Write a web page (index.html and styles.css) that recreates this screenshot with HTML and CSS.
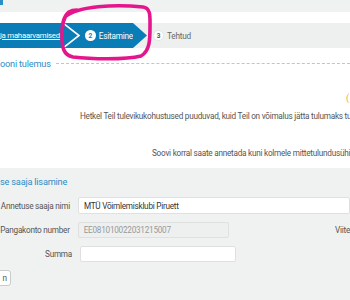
FILE: index.html
```html
<!DOCTYPE html>
<html lang="et">
<head>
    <meta charset="UTF-8">
    <title>Esitamine</title>
    <link rel="stylesheet" href="styles.css">
</head>
<body>
    <div class="top-strip"><span class="top-mark"></span></div>

    <div class="steps">
        <div class="step done"><a href="#">ja mahaarvamised</a></div>
        <svg class="chevron" width="17" height="25" viewBox="0 0 17 25">
            <rect width="17" height="25" fill="#0a7db6"/>
            <polyline points="0,0 16,12.5 0,25" fill="none" stroke="#fff" stroke-width="1.6"/>
        </svg>
        <div class="step current"><span class="num">2</span>Esitamine</div>
        <svg class="tip" width="14" height="25" viewBox="0 0 14 25">
            <polygon points="0,0 14,12.5 0,25" fill="#0a7db6"/>
        </svg>
        <div class="step todo"><span class="num">3</span>Tehtud</div>
    </div>

    <div class="section-title">
        <span>ooni tulemus</span>
        <span class="dots"></span>
    </div>

    <div class="result">
        <span class="warn">(</span>
        <p class="line-one">Hetkel Teil tulevikukohustused puuduvad, kuid Teil on võimalus jätta tulumaks tule</p>
        <p class="line-two">Soovi korral saate annetada kuni kolmele mittetulundusühing</p>
    </div>

    <div class="panel">
        <h2>se saaja lisamine</h2>
        <div class="form-row">
            <label>Annetuse saaja nimi</label>
            <input type="text" class="wide" value="MTÜ Võimlemisklubi Piruett">
        </div>
        <div class="form-row">
            <label>Pangakonto number</label>
            <input type="text" value="EE081010022031215007" disabled>
            <span class="side-label">Viite</span>
        </div>
        <div class="form-row">
            <label>Summa</label>
            <input type="text">
        </div>
        <button class="btn">n</button>
    </div>

    <svg class="circle-mark" width="100" height="62" viewBox="0 0 100 62">
        <path d="M10 14 C 22 3, 60 1, 88 4 C 96 5, 95 14, 95 24 C 95 36, 95 48, 86 53 C 70 57, 35 56, 18 54 C 8 52, 7 44, 7 32 C 7 22, 8 14, 14 9 C 17 7, 20 7, 22 7"
              fill="none" stroke="#e5168c" stroke-width="3.6" stroke-linecap="round"/>
    </svg>
</body>
</html>
```

FILE: styles.css
```css
body {
    margin: 0;
    font-family: Roboto, "Liberation Sans", sans-serif;
    color: #555;
    background: #fff;
    width: 350px;
    height: 300px;
    overflow: hidden;
    position: relative;
}
.top-strip {
    height: 12px;
    background: #f0f1f1;
}
.top-mark {
    display: block;
    width: 3px;
    height: 5px;
    background: #2a8fc7;
}
.steps {
    margin-top: 11px;
    height: 25px;
    display: flex;
    align-items: center;
    background: #eef0f0;
    font-size: 8.2px;
    letter-spacing: -0.2px;
    white-space: nowrap;
}
.step {
    height: 25px;
    display: flex;
    align-items: center;
}
.step.done {
    width: 63px;
    background: #0a7db6;
    font-size: 7.8px;
    letter-spacing: -0.25px;
}
.step.done a {
    color: #fff;
    text-decoration: underline;
}
.chevron, .tip {
    flex-shrink: 0;
}
.step.current {
    width: 48px;
    padding-left: 5px;
    background: #0a7db6;
    color: #fff;
}
.step.todo {
    padding-left: 6px;
    color: #666;
}
.num {
    width: 11px;
    height: 11px;
    border-radius: 50%;
    background: #fff;
    color: #0a7db6;
    font-size: 6.5px;
    font-weight: bold;
    letter-spacing: 0;
    display: inline-flex;
    align-items: center;
    justify-content: center;
    margin-right: 3px;
}
.step.todo .num {
    color: #555;
    border: 1px solid #e3e5e5;
    width: 9px;
    height: 9px;
}
.section-title {
    display: flex;
    align-items: center;
    margin-top: 9px;
    height: 12px;
    font-size: 9.2px;
    letter-spacing: -0.2px;
    color: #2a8fc7;
    white-space: nowrap;
}
.section-title .dots {
    flex: 1;
    margin-left: 5px;
    border-top: 1px dashed #9fd0ea;
}
.result {
    height: 99px;
    font-size: 8.2px;
    letter-spacing: -0.25px;
    color: #555;
    white-space: nowrap;
    display: flex;
    flex-direction: column;
}
.warn {
    align-self: flex-end;
    margin-top: 24px;
    width: 4px;
    color: #f0a040;
    font-size: 9px;
    line-height: 10px;
}
.result p {
    margin: 0;
    line-height: 12px;
}
.result .line-one {
    margin-top: 7px;
    padding-left: 80px;
}
.result .line-two {
    margin-top: 25px;
    padding-left: 152px;
}
.panel {
    background: #f0f1f1;
    height: 124px;
    padding-top: 8px;
}
.panel h2 {
    margin: 0 0 9px;
    font-size: 9.2px;
    letter-spacing: -0.2px;
    font-weight: normal;
    line-height: 12px;
    color: #2a8fc7;
    white-space: nowrap;
}
.form-row {
    display: flex;
    align-items: center;
    margin-bottom: 8px;
    font-size: 8.2px;
    letter-spacing: -0.25px;
    white-space: nowrap;
}
.form-row label {
    width: 72px;
    text-align: right;
    margin-right: 8px;
    color: #555;
}
.form-row input {
    width: 156px;
    height: 16px;
    box-sizing: border-box;
    border: 1px solid #dfe1e1;
    border-radius: 2px;
    background: #fff;
    padding: 0 5px;
    font-family: inherit;
    font-size: 8.2px;
    letter-spacing: -0.25px;
    color: #333;
}
.form-row input.wide {
    width: 280px;
    height: 17px;
}
.form-row input:disabled {
    background: #eef0f0;
    color: #999;
}
.side-label {
    margin-left: 106px;
    color: #555;
}
.btn {
    display: block;
    margin-top: 8px;
    margin-left: -10px;
    width: 21px;
    height: 16px;
    padding: 0 3px 0 0;
    text-align: right;
    border: 1px solid #c9cccc;
    border-radius: 3px;
    background: #fff;
    font-family: inherit;
    font-size: 8.2px;
    color: #555;
}
.circle-mark {
    position: absolute;
    left: 55px;
    top: 3px;
}
```
